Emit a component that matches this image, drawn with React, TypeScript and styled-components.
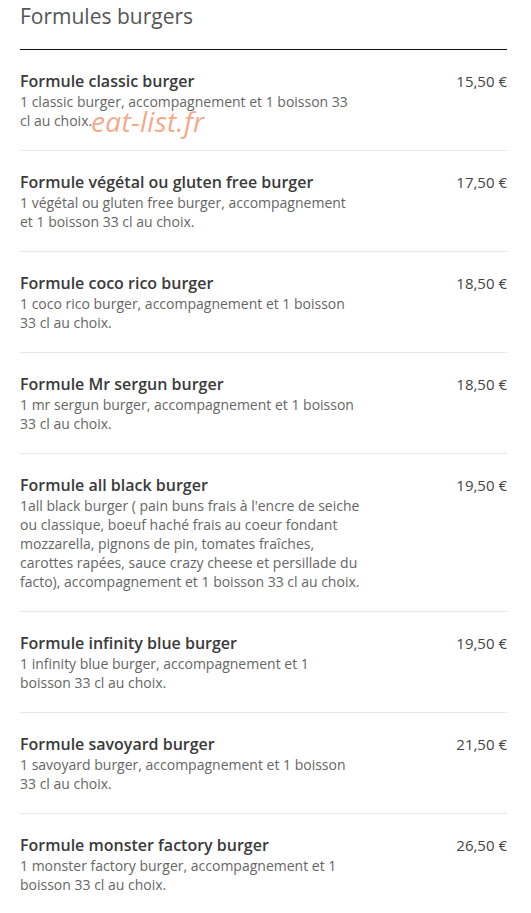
import React from "react";
import styled, { createGlobalStyle } from "styled-components";

const Global = createGlobalStyle`
  html, body { margin: 0; padding: 0; background: #fff; }
  body { font-family: "Open Sans", "Liberation Sans", sans-serif; -webkit-font-smoothing: antialiased; }
`;

const Page = styled.div`
  padding: 0 24px 0 20px;
`;

const Heading = styled.h2`
  margin: 0;
  padding: 2px 0 19px;
  font-size: 21px;
  line-height: 28px;
  font-weight: 400;
  color: #555;
  border-bottom: 1px solid #111;
`;

const List = styled.ul`
  list-style: none;
  margin: 0;
  padding: 0;
`;

const Item = styled.li`
  display: flex;
  justify-content: space-between;
  align-items: flex-start;
  padding: 20px 0 20px;
  border-top: 1px solid #e8e8e8;
  position: relative;
  &:first-child { border-top: none; }
`;

const TextCol = styled.div`
  width: 70%;
`;

const Title = styled.div`
  font-size: 16px;
  line-height: 22px;
  font-weight: 600;
  color: #3a3a3a;
`;

const Desc = styled.div`
  font-size: 14px;
  line-height: 19px;
  color: #666;
`;

const Price = styled.div`
  font-size: 15px;
  line-height: 22px;
  color: #444;
  white-space: nowrap;
`;

const Watermark = styled.span`
  position: absolute;
  left: 71px;
  top: 57px;
  font-size: 28px;
  letter-spacing: 0.3px;
  font-style: italic;
  color: rgba(240, 125, 75, 0.68);
  pointer-events: none;
  line-height: 1;
`;

const items = [
  ["Formule classic burger", "1 classic burger, accompagnement et 1 boisson 33 cl au choix.", "15,50 €"],
  ["Formule végétal ou gluten free burger", "1 végétal ou gluten free burger, accompagnement et 1 boisson 33 cl au choix.", "17,50 €"],
  ["Formule coco rico burger", "1 coco rico burger, accompagnement et 1 boisson 33 cl au choix.", "18,50 €"],
  ["Formule Mr sergun burger", "1 mr sergun burger, accompagnement et 1 boisson 33 cl au choix.", "18,50 €"],
  ["Formule all black burger", "1all black burger ( pain buns frais à l'encre de seiche ou classique, boeuf haché frais au coeur fondant mozzarella, pignons de pin, tomates fraîches, carottes rapées, sauce crazy cheese et persillade du facto), accompagnement et 1 boisson 33 cl au choix.", "19,50 €"],
  ["Formule infinity blue burger", "1 infinity blue burger, accompagnement et 1 boisson 33 cl au choix.", "19,50 €"],
  ["Formule savoyard burger", "1 savoyard burger, accompagnement et 1 boisson 33 cl au choix.", "21,50 €"],
  ["Formule monster factory burger", "1 monster factory burger, accompagnement et 1 boisson 33 cl au choix.", "26,50 €"],
];

export default function App() {
  return (
    <Page>
      <Global />
      <Heading>Formules burgers</Heading>
      <List>
        {items.map(([t, d, p], i) => (
          <Item key={i}>
            <TextCol>
              <Title>{t}</Title>
              <Desc>{d}</Desc>
            </TextCol>
            <Price>{p}</Price>
            {i === 0 && <Watermark>eat-list.fr</Watermark>}
          </Item>
        ))}
      </List>
    </Page>
  );
}
